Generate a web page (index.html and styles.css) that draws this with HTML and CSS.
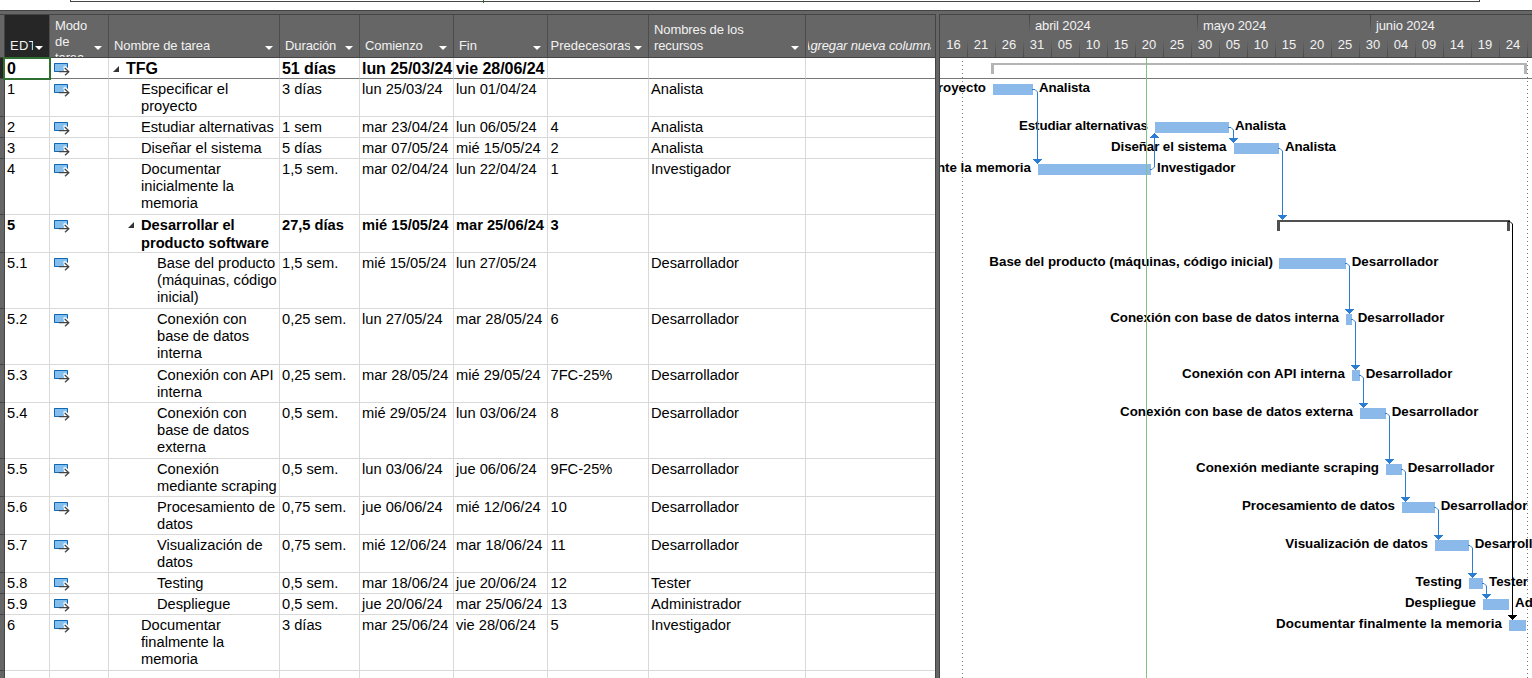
FILE: index.html
```html
<!DOCTYPE html>
<html lang="es">
<head>
<meta charset="utf-8">
<title>Diagrama de Gantt - TFG</title>
<link rel="stylesheet" href="styles.css">
</head>
<body>
<svg class="defs" width="0" height="0" aria-hidden="true">
  <symbol id="mode" viewBox="0 0 17 13">
    <path d="M0 0H14V4H11V6H5V9H0Z" fill="#83beec"/>
    <path d="M13.5 5V.5H.5V8.5H5" fill="none" stroke="#1067b3"/>
    <path d="M5 6H10V8H5Z" fill="#83beec"/>
    <path d="M9 4L11 2.5L14 5V7H10Z" fill="#fff" opacity=".7"/>
    <path d="M5 8.7H14.5M10.8 5L14.8 8.7L11 12.3" fill="none" stroke="#444" stroke-width="1.3"/>
  </symbol>
  <symbol id="open" viewBox="0 0 6 6"><path d="M6 0V6H0Z" fill="#333"/></symbol>
</svg>
<div class="timeline-strip"><div class="timeline-frame"><i></i></div></div>
<main class="view">
  <section class="sheet">
    <div class="row head">
      <div class="gut"></div>
      <div class="h sel"><span>EDT</span><b></b></div>
      <div class="h mode"><span>Modo<br>de<br>tarea</span><b></b></div>
      <div class="h"><span>Nombre de tarea</span><b></b></div>
      <div class="h"><span>Duración</span><b></b></div>
      <div class="h"><span>Comienzo</span><b></b></div>
      <div class="h"><span>Fin</span><b></b></div>
      <div class="h pred"><span>Predecesoras</span><b></b></div>
      <div class="h"><span>Nombres de los<br>recursos</span><b></b></div>
      <div class="h new"><span>Agregar nueva columna</span></div>
    </div>
    <div class="row r1 root"><div class="gut"></div><div class="active">0</div><div><svg class="m"><use href="#mode"/></svg></div><div class="l0"><svg class="o"><use href="#open"/></svg>TFG</div><div>51 días</div><div>lun 25/03/24</div><div>vie 28/06/24</div><div></div><div></div><div></div></div>
    <div class="row r2"><div class="gut"></div><div>1</div><div><svg class="m"><use href="#mode"/></svg></div><div class="l1">Especificar el<br>proyecto</div><div>3 días</div><div>lun 25/03/24</div><div>lun 01/04/24</div><div></div><div>Analista</div><div></div></div>
    <div class="row r1"><div class="gut"></div><div>2</div><div><svg class="m"><use href="#mode"/></svg></div><div class="l1">Estudiar alternativas</div><div>1 sem</div><div>mar 23/04/24</div><div>lun 06/05/24</div><div>4</div><div>Analista</div><div></div></div>
    <div class="row r1"><div class="gut"></div><div>3</div><div><svg class="m"><use href="#mode"/></svg></div><div class="l1">Diseñar el sistema</div><div>5 días</div><div>mar 07/05/24</div><div>mié 15/05/24</div><div>2</div><div>Analista</div><div></div></div>
    <div class="row r3"><div class="gut"></div><div>4</div><div><svg class="m"><use href="#mode"/></svg></div><div class="l1">Documentar<br>inicialmente la<br>memoria</div><div>1,5 sem.</div><div>mar 02/04/24</div><div>lun 22/04/24</div><div>1</div><div>Investigador</div><div></div></div>
    <div class="row r2 sum"><div class="gut"></div><div>5</div><div><svg class="m"><use href="#mode"/></svg></div><div class="l1"><svg class="o"><use href="#open"/></svg>Desarrollar el<br>producto software</div><div>27,5 días</div><div>mié 15/05/24</div><div>mar 25/06/24</div><div>3</div><div></div><div></div></div>
    <div class="row r3"><div class="gut"></div><div>5.1</div><div><svg class="m"><use href="#mode"/></svg></div><div class="l2">Base del producto<br>(máquinas, código<br>inicial)</div><div>1,5 sem.</div><div>mié 15/05/24</div><div>lun 27/05/24</div><div></div><div>Desarrollador</div><div></div></div>
    <div class="row r3"><div class="gut"></div><div>5.2</div><div><svg class="m"><use href="#mode"/></svg></div><div class="l2">Conexión con<br>base de datos<br>interna</div><div>0,25 sem.</div><div>lun 27/05/24</div><div>mar 28/05/24</div><div>6</div><div>Desarrollador</div><div></div></div>
    <div class="row r2"><div class="gut"></div><div>5.3</div><div><svg class="m"><use href="#mode"/></svg></div><div class="l2">Conexión con API<br>interna</div><div>0,25 sem.</div><div>mar 28/05/24</div><div>mié 29/05/24</div><div>7FC-25%</div><div>Desarrollador</div><div></div></div>
    <div class="row r3"><div class="gut"></div><div>5.4</div><div><svg class="m"><use href="#mode"/></svg></div><div class="l2">Conexión con<br>base de datos<br>externa</div><div>0,5 sem.</div><div>mié 29/05/24</div><div>lun 03/06/24</div><div>8</div><div>Desarrollador</div><div></div></div>
    <div class="row r2"><div class="gut"></div><div>5.5</div><div><svg class="m"><use href="#mode"/></svg></div><div class="l2">Conexión<br>mediante scraping</div><div>0,5 sem.</div><div>lun 03/06/24</div><div>jue 06/06/24</div><div>9FC-25%</div><div>Desarrollador</div><div></div></div>
    <div class="row r2"><div class="gut"></div><div>5.6</div><div><svg class="m"><use href="#mode"/></svg></div><div class="l2">Procesamiento de<br>datos</div><div>0,75 sem.</div><div>jue 06/06/24</div><div>mié 12/06/24</div><div>10</div><div>Desarrollador</div><div></div></div>
    <div class="row r2"><div class="gut"></div><div>5.7</div><div><svg class="m"><use href="#mode"/></svg></div><div class="l2">Visualización de<br>datos</div><div>0,75 sem.</div><div>mié 12/06/24</div><div>mar 18/06/24</div><div>11</div><div>Desarrollador</div><div></div></div>
    <div class="row r1"><div class="gut"></div><div>5.8</div><div><svg class="m"><use href="#mode"/></svg></div><div class="l2">Testing</div><div>0,5 sem.</div><div>mar 18/06/24</div><div>jue 20/06/24</div><div>12</div><div>Tester</div><div></div></div>
    <div class="row r1"><div class="gut"></div><div>5.9</div><div><svg class="m"><use href="#mode"/></svg></div><div class="l2">Despliegue</div><div>0,5 sem.</div><div>jue 20/06/24</div><div>mar 25/06/24</div><div>13</div><div>Administrador</div><div></div></div>
    <div class="row r3"><div class="gut"></div><div>6</div><div><svg class="m"><use href="#mode"/></svg></div><div class="l1">Documentar<br>finalmente la<br>memoria</div><div>3 días</div><div>mar 25/06/24</div><div>vie 28/06/24</div><div>5</div><div>Investigador</div><div></div></div>
    <div class="row rest"><div class="gut"></div><div></div><div></div><div></div><div></div><div></div><div></div><div></div><div></div><div></div></div>
  </section>
  <div class="splitter"></div>
  <section class="gantt">
    <div class="scale">
      <div class="months"><span></span><span>abril 2024</span><span>mayo 2024</span><span>junio 2024</span></div>
      <div class="days"><span>16</span><span>21</span><span>26</span><span>31</span><span>05</span><span>10</span><span>15</span><span>20</span><span>25</span><span>30</span><span>05</span><span>10</span><span>15</span><span>20</span><span>25</span><span>30</span><span>04</span><span>09</span><span>14</span><span>19</span><span>24</span><span></span></div>
    </div>
    <svg class="chart" width="592" height="620" viewBox="940 58 592 620">
      <defs>
        <path id="dn" d="M-4 -5H5V-4H4V-3H3V-2H2V-1H1V0H0V-1H-1V-2H-2V-3H-3V-4H-4Z"/>
        <path id="up" d="M-4 5H5V4H4V3H3V2H2V1H1V0H0V1H-1V2H-2V3H-3V4H-4Z"/>
      </defs>
      <path class="rule" d="M940 78.5H1532"/>
      <path class="dots" d="M962.5 61V678M1527.5 61V678"/>
      <g class="bars">
        <rect x="993" y="84" width="40" height="11"/>
        <rect x="1155" y="122" width="74" height="11"/>
        <rect x="1234" y="143" width="45" height="11"/>
        <rect x="1038" y="164" width="113" height="11"/>
        <rect x="1279" y="258" width="67" height="11"/>
        <rect x="1346" y="314" width="6" height="11"/>
        <rect x="1352" y="370" width="8" height="11"/>
        <rect x="1360" y="408" width="26" height="11"/>
        <rect x="1386" y="464" width="16" height="11"/>
        <rect x="1402" y="502" width="33" height="11"/>
        <rect x="1435" y="540" width="34" height="11"/>
        <rect x="1469" y="578" width="14" height="11"/>
        <rect x="1483" y="599" width="26" height="11"/>
        <rect x="1509" y="620" width="17" height="11"/>
      </g>
      <path fill="#b4b4b4" d="M991 63H1527V74H1524V65H994V74H991Z"/>
      <path fill="#505050" d="M1277 220H1510V231H1507V222H1280V231H1277Z"/>
      <g class="lab end">
        <text x="986" y="92">Especificar el proyecto</text>
        <text x="1148" y="130" textLength="129">Estudiar alternativas</text>
        <text x="1226.5" y="151" textLength="115.5">Diseñar el sistema</text>
        <text x="1031" y="172">Documentar inicialmente la memoria</text>
        <text x="1273" y="266">Base del producto (máquinas, código inicial)</text>
        <text x="1339" y="322">Conexión con base de datos interna</text>
        <text x="1345" y="378" textLength="163">Conexión con API interna</text>
        <text x="1353" y="416" textLength="233">Conexión con base de datos externa</text>
        <text x="1379" y="472" textLength="183">Conexión mediante scraping</text>
        <text x="1395" y="510" textLength="153">Procesamiento de datos</text>
        <text x="1428" y="548">Visualización de datos</text>
        <text x="1462" y="586">Testing</text>
        <text x="1476" y="607">Despliegue</text>
        <text x="1502" y="628" textLength="226">Documentar finalmente la memoria</text>
      </g>
      <g class="lab">
        <text x="1039" y="92" textLength="51">Analista</text>
        <text x="1235" y="130" textLength="51">Analista</text>
        <text x="1285" y="151" textLength="51">Analista</text>
        <text x="1157" y="172" textLength="78.5">Investigador</text>
        <text x="1351.7" y="266">Desarrollador</text>
        <text x="1357.7" y="322">Desarrollador</text>
        <text x="1365.7" y="378">Desarrollador</text>
        <text x="1391.7" y="416">Desarrollador</text>
        <text x="1407.7" y="472">Desarrollador</text>
        <text x="1440.7" y="510">Desarrollador</text>
        <text x="1474.7" y="548">Desarrollador</text>
        <text x="1489" y="586">Tester</text>
        <text x="1515" y="607">Administrador</text>
      </g>
      <path class="link" d="M1032 89.5H1035L1037.5 92V160M1150 169.5H1152L1154.5 167V137M1228 127.5H1231L1233.5 130V139M1278 148.5H1280L1282.5 151V216M1345 263.5H1347L1349.5 266V310M1351 319.5H1353L1355.5 322V366M1359 375.5H1361L1363.5 378V404M1385 413.5H1387L1389.5 416V460M1401 469.5H1403L1405.5 472V498M1434 507.5H1436L1438.5 510V536M1468 545.5H1470L1472.5 548V574M1482 583.5H1484L1486.5 586V595"/>
      <g fill="#2b7cd3">
        <use href="#dn" x="1037" y="164"/><use href="#up" x="1154" y="133"/>
        <use href="#dn" x="1233" y="143"/><use href="#dn" x="1282" y="220"/>
        <use href="#dn" x="1349" y="314"/><use href="#dn" x="1355" y="370"/>
        <use href="#dn" x="1363" y="408"/><use href="#dn" x="1389" y="464"/>
        <use href="#dn" x="1405" y="502"/><use href="#dn" x="1438" y="540"/>
        <use href="#dn" x="1472" y="578"/><use href="#dn" x="1486" y="599"/>
      </g>
      <path class="link dark" d="M1508 221.5H1510L1512.5 224V616"/>
      <use href="#dn" x="1512" y="620"/>
      <path d="M1146.5 58V678" stroke="#83c183"/>
    </svg>
  </section>
</main>
</body>
</html>
```
FILE: styles.css
```css
* { box-sizing: border-box; }
body {
  margin: 0;
  height: 678px;
  overflow: hidden;
  background: #fff;
  font: 14.667px/17px "Liberation Sans", Arial, sans-serif;
  color: #000;
}
.defs { display: block; height: 0; }
.timeline-strip { height: 10px; padding: 0 52px 0 70px; }
.timeline-frame { height: 2px; border: 1px solid #444; border-top: 0; padding-left: 412px; }
.timeline-frame i { display: block; width: 1px; height: 3px; background: #365f36; }
.view {
  display: flex;
  height: 668px;
  border-top: 1px solid #444;
  background: #666;
  padding-top: 3px;
}
.sheet { width: 936px; border-right: 1px solid #444; border-top: 1px solid #444; flex: none; }
.row { display: grid; grid-template-columns: 5px 45px 59px 171px 80px 94px 94px 101px 157px 129px; background: #fff; }
.row > div {
  border-right: 1px solid #d9d9d9;
  border-bottom: 1px solid #d9d9d9;
  padding: 2px 0 0 2px;
  white-space: nowrap;
  min-width: 0;
}
.row > div:last-child { border-right: 0; }
.row > div:nth-child(8) { padding-left: 2.5px; }
.row > div.gut { background: #666; border-right: 1px solid #444; border-bottom-color: #444; }
.r1 { height: 21px; }
.r2 { height: 38px; }
.r3 { height: 56px; }
.rest { height: 7px; }
.row.rest > div { border-bottom: 0; }
.root { font-size: 16px; font-weight: bold; letter-spacing: -.05px; }
.root > div { border-bottom-color: #777; }
.root > div.gut { background: #262626; }
.root > div.active { outline: 2px solid #2f6f2f; outline-offset: -1px; margin-left: -1px; padding-left: 3px; z-index: 1; border: 0; }
.sum { font-weight: bold; line-height: 18px; }
.row.sum > div { padding-top: 1px; }
.m { display: block; width: 17px; height: 13px; margin: 3px 0 0 2px; }
.sum .m { margin-top: 4px; }
.o { width: 6px; height: 6px; margin: 0 7px 2px -13px; }
.row > div.l0 { padding-left: 17px; }
.row > div.l1 { padding-left: 32px; }
.row > div.l2 { padding-left: 48px; }
.head { height: 43px; background: #666; color: #f2f2f2; font-size: 13px; line-height: 16px; }
.row > .h {
  display: flex;
  align-items: flex-end;
  justify-content: space-between;
  overflow: hidden;
  border-bottom-color: #444;
  border-right-color: #4d4d4d;
  padding: 0 6px 3px 5px;
}
.h span { overflow: hidden; letter-spacing: -.1px; }
.h b { flex: none; width: 0; border: 4px solid transparent; border-top-color: #fff; border-bottom: 0; margin-bottom: 4px; }
.row > .h.sel { background: #262626; }
.h.sel span { width: 23px; letter-spacing: .3px; }
.row > .h.mode { align-items: flex-start; padding-top: 3px; }
.h.mode b { align-self: flex-end; }
.h.pred span { width: 79px; letter-spacing: 0; }
.row > .h.new { justify-content: center; font-style: italic; padding: 0 4px 3px 2px; }
.h.new span { display: flex; justify-content: center; width: 123px; letter-spacing: -.13px; }
.splitter { width: 4px; flex: none; border-right: 1px solid #444; }
.gantt { width: 592px; border-top: 1px solid #444; background: #fff; }
.scale { height: 43px; background: #666; border-bottom: 1px solid #444; color: #f2f2f2; font-size: 13px; overflow: hidden; }
.months { display: grid; grid-template-columns: 89px 168px 173px 162px; height: 22px; line-height: 22px; letter-spacing: -.14px; }
.months span { padding-left: 6px; }
.months span + span { background: linear-gradient(#444, #555 60%, #666) 0 0 / 1px 17px no-repeat; }
.days { display: grid; grid-template-columns: 27px repeat(21, 28px); height: 20px; line-height: 16px; text-align: center; }
.days span + span { background: linear-gradient(#666, #4a4a4a) 0 3px / 1px 17px no-repeat; }
.chart { display: block; }
.rule { stroke: #777; }
.dots { stroke: #777; stroke-dasharray: 1 3; }
.bars { fill: #8ab9ea; }
.lab { font-size: 13.333px; font-weight: bold; }
.end { text-anchor: end; }
.link { fill: none; stroke: #2b7cd3; }
.dark { stroke: #000; }
```
